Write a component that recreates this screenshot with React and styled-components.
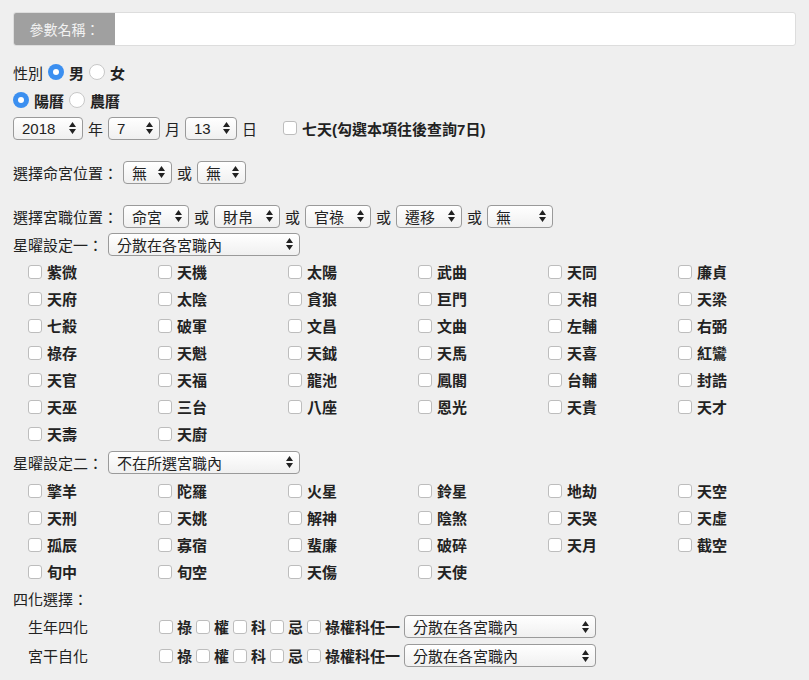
import React from 'react';
import styled, { createGlobalStyle } from 'styled-components';

const Global = createGlobalStyle`
  body { margin: 0; background: #efefef; font-family: "Liberation Sans", "Noto Sans CJK TC", sans-serif; font-size: 15px; color: #222; }
`;

const Page = styled.div`
  padding: 12px 13px 0 13px;
  width: 809px;
  box-sizing: border-box;
`;

const NameBar = styled.div`
  display: flex;
  height: 32px;
  border: 1px solid #ddd;
  border-radius: 3px;
  overflow: hidden;
  background: #fff;
  margin-bottom: 12px;
`;

const NameLabel = styled.div`
  width: 101px;
  background: #a0a0a0;
  color: #f2f2f2;
  font-size: 14px;
  display: flex;
  align-items: center;
  justify-content: center;
`;

const Row = styled.div`
  display: flex;
  align-items: center;
  gap: 5px;
  height: ${({ h }) => h || 28}px;
  margin-top: ${({ mt }) => mt || 0}px;
`;

const Bold = styled.span`
  font-weight: 600;
`;

const Radio = styled.span`
  width: 16px;
  height: 16px;
  border-radius: 50%;
  box-sizing: border-box;
  background: ${({ on }) => (on ? '#3b8ff0' : '#fff')};
  border: ${({ on }) => (on ? 'none' : '1px solid #c8c8c8')};
  display: inline-flex;
  align-items: center;
  justify-content: center;
  &::after {
    content: '';
    width: 6px;
    height: 6px;
    border-radius: 50%;
    background: ${({ on }) => (on ? '#fff' : 'transparent')};
  }
`;

const Box = styled.span`
  width: 14px;
  height: 14px;
  border: 1px solid #bdbdbd;
  border-radius: 3px;
  background: #fff;
  box-sizing: border-box;
  flex-shrink: 0;
`;

const SelectBox = styled.span`
  display: inline-flex;
  align-items: center;
  justify-content: space-between;
  width: ${({ w }) => w}px;
  height: 23px;
  box-sizing: border-box;
  padding: 0 6px 0 8px;
  border: 1px solid #9a9a9a;
  border-radius: 4px;
  background: linear-gradient(#fff, #f0f0f0);
  font-size: 15px;
`;

const Arrows = () => (
  <svg width="7" height="12" viewBox="0 0 7 12">
    <path d="M3.5 0 L7 5 H0 Z M3.5 12 L7 7 H0 Z" fill="#222" />
  </svg>
);

const Select = ({ w, children }) => (
  <SelectBox w={w}>
    <span>{children}</span>
    <Arrows />
  </SelectBox>
);

const Grid = styled.div`
  display: grid;
  grid-template-columns: repeat(6, 130px);
  grid-auto-rows: 27px;
  padding-left: 15px;
`;

const Item = styled.label`
  display: flex;
  align-items: center;
  gap: 5px;
  font-weight: 600;
`;

const SubRow = styled.div`
  display: flex;
  align-items: center;
  height: 29px;
  padding-left: 15px;
`;

const SubLabel = styled.span`
  width: 131px;
`;

const Check = ({ label }) => (
  <Item>
    <Box />
    {label}
  </Item>
);

const stars1 = ['紫微','天機','太陽','武曲','天同','廉貞','天府','太陰','貪狼','巨門','天相','天梁','七殺','破軍','文昌','文曲','左輔','右弼','祿存','天魁','天鉞','天馬','天喜','紅鸞','天官','天福','龍池','鳳閣','台輔','封誥','天巫','三台','八座','恩光','天貴','天才','天壽','天廚'];
const stars2 = ['擎羊','陀羅','火星','鈴星','地劫','天空','天刑','天姚','解神','陰煞','天哭','天虛','孤辰','寡宿','蜚廉','破碎','天月','截空','旬中','旬空','天傷','天使'];

const SiHua = ({ label }) => (
  <SubRow>
    <SubLabel>{label}</SubLabel>
    <Item style={{ gap: 4 }}>
      <Box />祿 <Box />權 <Box />科 <Box />忌 <Box />祿權科任一
    </Item>
    <span style={{ marginLeft: 4 }}>
      <Select w={192}>分散在各宮職內</Select>
    </span>
  </SubRow>
);

export default function App() {
  return (
    <Page>
      <Global />
      <NameBar>
        <NameLabel>參數名稱：</NameLabel>
      </NameBar>
      <Row>性別 <Radio on /> <Bold>男</Bold><Radio /> <Bold>女</Bold></Row>
      <Row><Radio on /> <Bold>陽曆</Bold><Radio /> <Bold>農曆</Bold></Row>
      <Row>
        <Select w={70}>2018</Select> 年 <Select w={52}>7</Select> 月 <Select w={52}>13</Select> 日
        <span style={{ width: 16 }} />
        <Box /> <Bold>七天(勾選本項往後查詢7日)</Bold>
      </Row>
      <Row mt={16}>
        選擇命宮位置： <Select w={49}>無</Select> 或 <Select w={49}>無</Select>
      </Row>
      <Row mt={16}>
        選擇宮職位置： <Select w={66}>命宮</Select> 或 <Select w={66}>財帛</Select> 或 <Select w={66}>官祿</Select> 或 <Select w={66}>遷移</Select> 或 <Select w={66}>無</Select>
      </Row>
      <Row h={28}>星曜設定一： <Select w={192}>分散在各宮職內</Select></Row>
      <Grid>{stars1.map((s) => <Check key={s} label={s} />)}</Grid>
      <Row h={30}>星曜設定二： <Select w={192}>不在所選宮職內</Select></Row>
      <Grid>{stars2.map((s) => <Check key={s} label={s} />)}</Grid>
      <Row h={27}>四化選擇：</Row>
      <SiHua label="生年四化" />
      <SiHua label="宮干自化" />
    </Page>
  );
}
